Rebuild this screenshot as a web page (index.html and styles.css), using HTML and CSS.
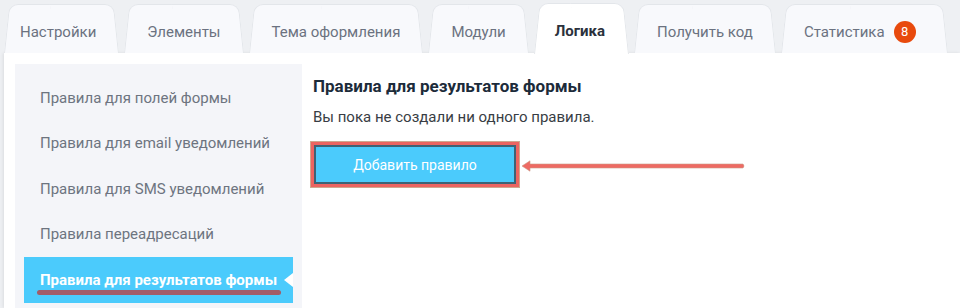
FILE: index.html
```html
<!DOCTYPE html>
<html lang="ru">
<head>
  <meta charset="UTF-8" />
  <title>Логика</title>
  <link rel="stylesheet" href="styles.css">
</head>
<body>
  <div class="tabs">
    <div class="tab first">Настройки</div>
    <div class="tab">Элементы</div>
    <div class="tab">Тема оформления</div>
    <div class="tab">Модули</div>
    <div class="tab active">Логика</div>
    <div class="tab">Получить код</div>
    <div class="tab last">Статистика <span class="badge">8</span></div>
  </div>

  <div class="panel">
    <aside class="side">
      <div class="side-item">Правила для полей формы</div>
      <div class="side-item">Правила для email уведомлений</div>
      <div class="side-item">Правила для SMS уведомлений</div>
      <div class="side-item">Правила переадресаций</div>
      <div class="side-item current">Правила для результатов формы<span class="mark"></span></div>
    </aside>

    <main class="rules">
      <h2>Правила для результатов формы</h2>
      <p>Вы пока не создали ни одного правила.</p>
      <div class="btn-wrap">
        <button class="add">Добавить правило</button>
        <svg class="arrow" width="228" height="14" viewBox="0 0 228 14">
          <path d="M3 7 L11 1.8 L11 5 L224 5 Q226 7 224 9 L11 9 L11 12.2 Z" fill="#ee6a63" stroke="#c99a86" stroke-width="0.6" stroke-linejoin="round"/>
        </svg>
      </div>
    </main>
  </div>
</body>
</html>
```

FILE: styles.css
```css
body {
  margin: 0;
  height: 308px;
  background: #eef0f3;
  font-family: Roboto, "Noto Sans", sans-serif;
  overflow: hidden;
}
.tabs {
  display: flex;
  gap: 5px;
  padding: 4px 0 0 4px;
  height: 49px;
  position: relative;
  z-index: 2;
}
.tab {
  position: relative;
  height: 49px;
  padding: 7px 23px 0;
  box-sizing: border-box;
  display: flex;
  align-items: center;
  font-size: 15px;
  color: #6b7280;
  white-space: nowrap;
}
.tab.first {
  padding-left: 16px;
}
.tab.last {
  padding-right: 32px;
}
.tab::before,
.tab::after {
  content: "";
  position: absolute;
  top: 0;
  bottom: 0;
  width: 55%;
  background: #f8f9fc;
  border-top: 1px solid #e3e6ea;
  z-index: -1;
  transform-origin: bottom;
}
.tab::before {
  left: 0;
  border-left: 1px solid #e3e6ea;
  border-radius: 9px 0 0 0;
  transform: skewX(-6deg);
}
.tab::after {
  right: 0;
  border-right: 1px solid #e3e6ea;
  border-radius: 0 9px 0 0;
  transform: skewX(6deg);
}
.tab.active {
  height: 50px;
  margin-top: -1px;
  padding: 6px 24px 0 21px;
  color: #2b313c;
  font-weight: bold;
}
.tab.active::before,
.tab.active::after {
  background: #fff;
  bottom: -1px;
}
.badge {
  display: inline-block;
  width: 22px;
  height: 22px;
  line-height: 22px;
  margin-left: 9px;
  border-radius: 50%;
  background: #e84a0d;
  color: #fff;
  font-size: 13px;
  text-align: center;
}
.panel {
  margin-left: 4px;
  background: #fff;
  height: 255px;
  box-sizing: border-box;
  display: flex;
  padding: 11px 0 0 11px;
  box-shadow: -1px 0 3px rgba(0, 0, 0, 0.08);
  position: relative;
  z-index: 1;
}
.side {
  width: 287px;
  background: #f4f5f9;
  padding-top: 11px;
  box-sizing: border-box;
}
.side-item {
  position: relative;
  height: 45.5px;
  margin: 0 9px;
  padding-left: 16px;
  display: flex;
  align-items: center;
  font-size: 15px;
  color: #6d7480;
}
.side-item.current {
  background: #4bcbfc;
  color: #fff;
  font-weight: bold;
}
.side-item.current::after {
  content: "";
  position: absolute;
  right: 0;
  top: 50%;
  margin-top: -7px;
  border-style: solid;
  border-width: 7px 9px 7px 0;
  border-color: transparent #fff transparent transparent;
}
.mark {
  position: absolute;
  left: 13px;
  top: 33px;
  width: 244px;
  height: 5px;
  border-radius: 3px;
  background: #a25c68;
}
.rules {
  padding: 12px 0 0 11px;
}
.rules h2 {
  margin: 0;
  font-size: 17px;
  line-height: 20px;
  color: #1c2b3a;
}
.rules p {
  margin: 11px 0 0;
  font-size: 15px;
  line-height: 20px;
  color: #383d44;
}
.btn-wrap {
  position: relative;
  display: inline-block;
  margin: 18px 0 0 1px;
}
.add {
  display: block;
  width: 202px;
  height: 39px;
  background: #4bcbfc;
  border: 2px solid #3e6275;
  outline: 3px solid #ec6461;
  box-shadow: 0 0 0 4px #cfa88f;
  color: #fff;
  font-family: Roboto, sans-serif;
  font-size: 14px;
  cursor: pointer;
}
.arrow {
  position: absolute;
  left: 100%;
  top: 50%;
  margin: -6px 0 0 3px;
}
```
